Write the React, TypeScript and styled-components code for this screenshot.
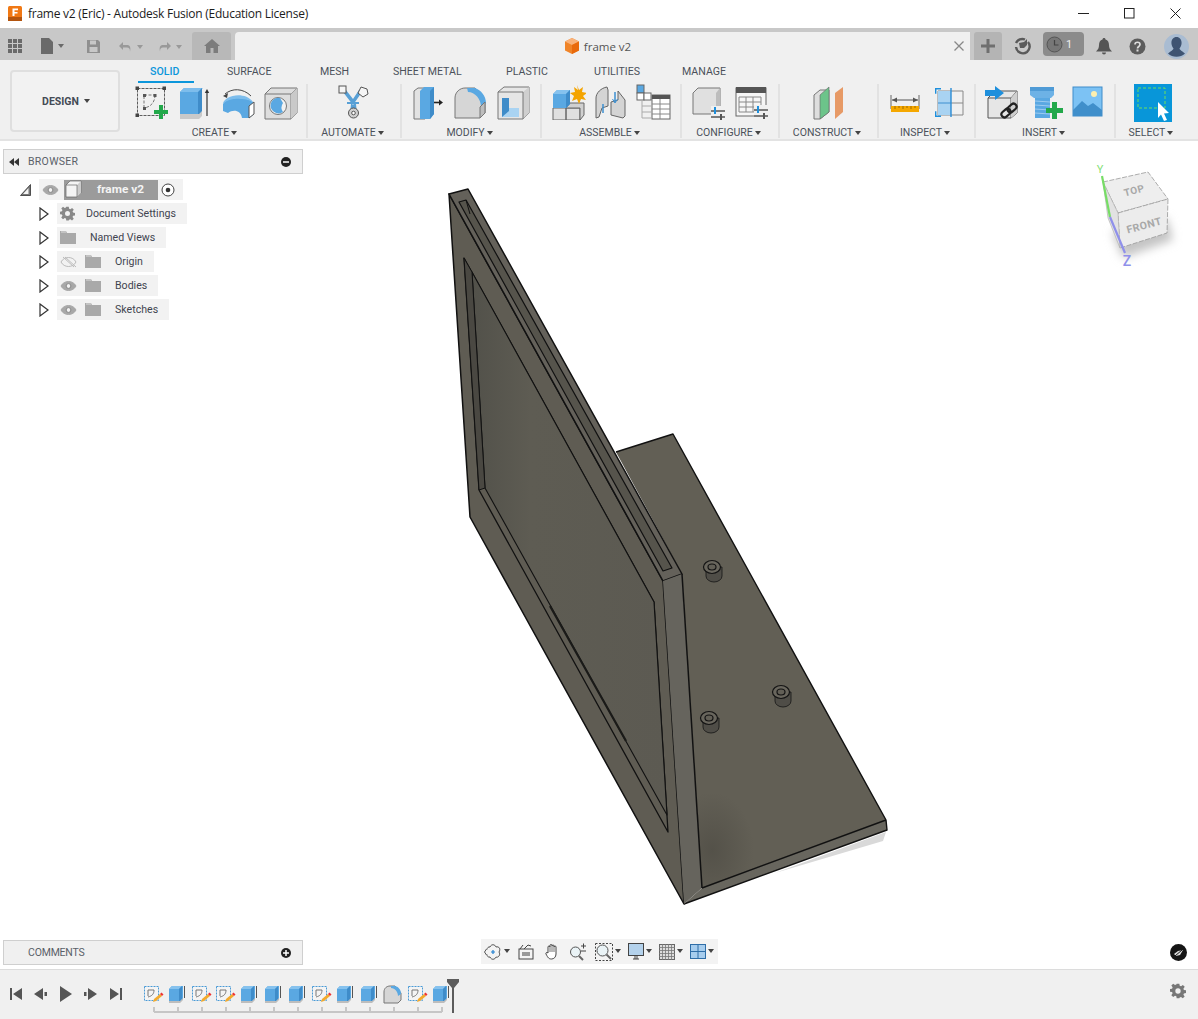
import React from 'react';
import styled, { createGlobalStyle } from 'styled-components';

const GlobalStyle = createGlobalStyle`
  html, body { margin: 0; padding: 0; background: #fff; }
  body { font-family: Roboto, "Liberation Sans", sans-serif; }
`;

const BLUE = '#5aa8e2';
const BLUE_D = '#3f8cc9';
const BLUE_L = '#a9d3f2';
const GREY_LINE = '#111';
const LINE = '#5c5c5c';
const GREEN = '#22a84a';

/* ---------- layout ---------- */

const Page = styled.div`
  width: 1198px;
  height: 1019px;
  display: flex;
  flex-direction: column;
  overflow: hidden;
  background: #fff;
`;

const TitleBar = styled.div`
  height: 28px;
  flex: none;
  box-sizing: border-box;
  padding: 0 0 2px 8px;
  display: flex;
  align-items: center;
  background: #fff;
`;

const TitleText = styled.span`
  margin-left: 6px;
  font: 400 12px "Open Sans", sans-serif;
  letter-spacing: -0.25px;
  color: #1c1c1c;
  flex: 1;
`;

const WinButton = styled.div`
  width: 46px;
  height: 24px;
  display: flex;
  align-items: center;
  justify-content: center;
`;

const TabStrip = styled.div`
  height: 32px;
  flex: none;
  box-sizing: border-box;
  padding-top: 4px;
  display: flex;
  background: #c8c8c8;
`;

const StripButton = styled.div<{ $w: number }>`
  width: ${(p) => p.$w}px;
  height: 28px;
  flex: none;
  display: flex;
  align-items: center;
  justify-content: center;
`;

const HomeTab = styled(StripButton)`
  margin-left: 3px;
  background: #b8b8b8;
  border-radius: 3px 3px 0 0;
`;

const DocTab = styled.div`
  width: 735px;
  margin-left: 4px;
  padding-right: 10px;
  box-sizing: border-box;
  flex: none;
  position: relative;
  display: flex;
  align-items: center;
  justify-content: center;
  gap: 4px;
  background: #f0f0f0;
  border-radius: 4px 0 0 0;
  font: 400 11.5px "Open Sans", sans-serif;
  color: #555;
`;

const DocClose = styled.svg`
  position: absolute;
  right: 6px;
  top: 9px;
`;

const PlusTab = styled(StripButton)`
  margin-left: 4px;
  background: #b4b4b4;
  border-radius: 3px 3px 0 0;
`;

const ClockPill = styled.div`
  width: 41px;
  height: 24px;
  margin-left: 1px;
  flex: none;
  display: flex;
  align-items: center;
  gap: 3px;
  padding-left: 3px;
  box-sizing: border-box;
  background: #8b8b8b;
  border-radius: 4px;
  font: 400 11px Roboto, sans-serif;
  color: #eee;
`;

const Ribbon = styled.div`
  height: 81px;
  flex: none;
  box-sizing: border-box;
  display: flex;
  background: #f0f0f0;
  border-bottom: 2px solid #e3e3e3;
`;

const DesignButton = styled.div`
  width: 110px;
  height: 62px;
  margin: 10px 0 0 10px;
  padding-left: 2px;
  flex: none;
  box-sizing: border-box;
  display: flex;
  align-items: center;
  justify-content: center;
  gap: 5px;
  background: #f2f2f2;
  border: 2px solid #dfdfdf;
  border-radius: 4px;
  font: 700 10.5px Roboto, sans-serif;
  color: #444b55;
`;

const RibbonBody = styled.div`
  flex: 1;
  display: flex;
  flex-direction: column;
`;

const TabRow = styled.div`
  height: 23px;
  flex: none;
  margin-left: 18px;
  display: flex;
`;

const RibbonTab = styled.div<{ $active?: boolean; $w: number }>`
  width: ${(p) => p.$w}px;
  flex: none;
  box-sizing: border-box;
  height: 23px;
  position: relative;
  padding: 1px 0 0 12px;
  line-height: 21px;
  font-size: 10.6px;
  color: ${(p) => (p.$active ? '#0b96db' : '#4b505a')};
  font-weight: ${(p) => (p.$active ? 500 : 400)};
  white-space: nowrap;

  &::after {
    content: '';
    display: ${(p) => (p.$active ? 'block' : 'none')};
    position: absolute;
    left: 0;
    bottom: 0;
    width: 56px;
    height: 2px;
    background: #0b96db;
  }
`;

const GroupRow = styled.div`
  margin: 1px 0 0 6px;
  display: flex;
`;

const Group = styled.div<{ $w: number; $last?: boolean }>`
  width: ${(p) => p.$w}px;
  height: 54px;
  flex: none;
  box-sizing: border-box;
  display: flex;
  flex-direction: column;
  align-items: center;
  border-right: 2px solid ${(p) => (p.$last ? 'transparent' : '#e2e2e2')};
`;

const ToolRow = styled.div`
  height: 36px;
  display: flex;
  gap: 7px;
`;

const GroupLabel = styled.div`
  margin: 6px 0 0 -3px;
  display: flex;
  align-items: center;
  gap: 2px;
  line-height: 14px;
  font-size: 10.5px;
  color: #4b505a;
  white-space: nowrap;
`;

const Caret = styled.i`
  display: inline-block;
  width: 0;
  height: 0;
  border-left: 3px solid transparent;
  border-right: 3px solid transparent;
  border-top: 4px solid #444;
  margin-top: -1px;
`;

const ToolIcon = styled.svg.attrs({ width: 36, height: 36, viewBox: '0 0 36 36' })`
  display: block;
  flex: none;
`;

const Canvas = styled.div`
  flex: 1;
  position: relative;
  background: #fff;
`;

const ModelSvg = styled.svg`
  position: absolute;
  inset: 0;
`;

const BrowserDock = styled.div`
  position: absolute;
  left: 3px;
  top: 8px;
  width: 300px;
`;

const DockHead = styled.div`
  height: 25px;
  box-sizing: border-box;
  display: flex;
  align-items: center;
  padding: 0 11px 0 5px;
  background: #f0f0f0;
  border: 1px solid #cfcfcf;
  font-size: 10.5px;
  color: #5a6068;
`;

const DockTitle = styled.span`
  margin-left: 9px;
  flex: 1;
  letter-spacing: 0.3px;
`;

const CommentsDock = styled(BrowserDock)`
  top: 799px;
`;

const CommentsTitle = styled.span`
  margin-left: 19px;
  flex: 1;
  letter-spacing: -0.2px;
`;

const Tree = styled.div`
  margin-top: 5px;
  display: flex;
  flex-direction: column;
  gap: 3px;
`;

const TreeRow = styled.div<{ $root?: boolean }>`
  height: 21px;
  display: flex;
  align-items: center;
  gap: 8px;
  padding-left: ${(p) => (p.$root ? 17 : 36)}px;
`;

const Chip = styled.div`
  height: 21px;
  display: flex;
  align-items: center;
  padding: 0 11px 0 3px;
  background: #f2f2f2;
  font-size: 10.6px;
  color: #3f4450;
  white-space: nowrap;
`;

const RootChip = styled(Chip)`
  padding: 0 8px 0 3px;
  gap: 5px;
`;

const RootLabel = styled.div`
  width: 94px;
  height: 20px;
  box-sizing: border-box;
  display: flex;
  align-items: center;
  padding: 0 0 1px 1px;
  background: #9b9b9b;
  color: #f4f4f4;
  font-weight: 700;
  font-size: 11.8px;
`;

const RootName = styled.span`
  margin-left: 15px;
`;

const ActiveTarget = styled.svg`
  margin-left: -2px;
`;

const ChipLabel = styled.span<{ $ml: number }>`
  margin-left: ${(p) => p.$ml}px;
  display: inline-flex;
`;

const NavBar = styled.div`
  position: absolute;
  left: 481px;
  top: 798px;
  width: 237px;
  height: 25px;
  box-sizing: border-box;
  display: flex;
  align-items: center;
  gap: 8px;
  padding-left: 3px;
  background: #f3f3f3;
`;

const NavItem = styled.div`
  display: flex;
  align-items: center;
  gap: 2px;

  & > i {
    margin-right: -1px;
  }
`;

const NavBadge = styled.svg`
  position: absolute;
  left: 1170px;
  top: 803px;
`;

const ViewCubeSvg = styled.svg`
  position: absolute;
  left: 1080px;
  top: 15px;
`;

const Timeline = styled.div`
  height: 50px;
  flex: none;
  box-sizing: border-box;
  display: flex;
  align-items: flex-start;
  padding: 13px 0 0 3px;
  background: #f0f0f0;
  border-top: 1px solid #dcdcdc;
`;

const PlayButton = styled.div`
  width: 25px;
  height: 22px;
  flex: none;
  display: flex;
  align-items: center;
  justify-content: center;
`;

const Track = styled.div`
  margin-left: 12px;
  position: relative;
  width: 312px;
  flex: none;
`;

const TrackItems = styled.div`
  display: flex;
`;

const TrackBracket = styled.svg`
  display: block;
`;

const Playhead = styled.svg`
  position: absolute;
  left: 307px;
  top: -4px;
`;

const TimelineGear = styled.div`
  margin: 0 12px 0 auto;
`;

/* ---------- ribbon icons ---------- */

const SketchIcon = () => (
  <ToolIcon>
    <rect x="3.5" y="4.5" width="27" height="27" fill="none" stroke={LINE} strokeDasharray="3 1" />
    {[[3, 4], [30, 4], [3, 31]].map(([x, y]) => (
      <rect key={x * 40 + y} x={x - 1.5} y={y - 1.5} width="3.5" height="3.5" fill="#444" />
    ))}
    <path d="M10 11h11M10 12v12M21 11c0 7-4 12-11 13" fill="none" stroke="#777" strokeDasharray="3 1.5" />
    <rect x="9" y="10" width="3" height="3" fill="#555" />
    <rect x="19.5" y="10" width="3" height="3" fill="#555" />
    <rect x="9" y="23" width="3" height="3" fill="#555" />
    <path d="M25 21h4v5h5v4h-5v5h-4v-5h-5v-4h5z" fill={GREEN} />
  </ToolIcon>
);

const ExtrudeIcon = () => (
  <ToolIcon>
    <path d="M3 8l4-4h18v25H3z" fill={BLUE} />
    <path d="M3 8h18v22H3z" fill={BLUE} />
    <path d="M3 8l4-4h19l-4 4z" fill="#7dbdec" />
    <path d="M21 8l4-4v25l-4 4z" fill={BLUE_D} />
    <path d="M3 30h19l3-3v5l-3 3H3z" fill="#c9c9c9" />
    <path d="M30 32V7" stroke="#333" strokeWidth="1.2" />
    <path d="M27.8 9l2.2-4 2.2 4z" fill="#333" />
  </ToolIcon>
);

const RevolveIcon = () => (
  <ToolIcon>
    <path d="M3 20c4-7 22-8 30-2v13l-4 3H22c-1-8-9-9-14-5l-5-2z" fill={BLUE} />
    <path d="M3 20c1-9 22-13 30-2-8-4-24-5-30 2z" fill="#7dbdec" />
    <path d="M29 22l5-4v12l-5 4z" fill="#fff" stroke="#555" />
    <path d="M5 10c7-6 18-6 26 2" fill="none" stroke="#444" />
    <path d="M3 12l5-3-1 5z" fill="#444" />
  </ToolIcon>
);

const HoleIcon = () => (
  <ToolIcon>
    <path d="M2 10l6-6h26v25l-6 6H2z" fill="#dedede" stroke="#777" />
    <path d="M2 10h26v25M28 10l6-6" fill="none" stroke="#777" />
    <path d="M28 10l6-6v25l-6 6z" fill="#c9c9c9" />
    <circle cx="15" cy="22" r="8.5" fill="#f2f2f2" stroke="#777" />
    <path d="M8 19a8 8 0 0 1 9-5l3 5a8 8 0 0 0 0 9 8 8 0 0 1-12-9z" fill={BLUE} />
  </ToolIcon>
);

const AutomateIcon = () => (
  <ToolIcon>
    <path d="M7 8l10 13 9-13-3-2-6 9-7-9zM15 20h5l1 10h-7z" fill="#58a0d6" />
    <path d="M11 18h12v2H11z" fill="#58a0d6" />
    <rect x="3" y="2" width="7" height="7" fill="#f5f5f5" stroke="#555" />
    <path d="M25 3l6 2 1 5-5 3-5-4z" fill="#f5f5f5" stroke="#555" />
    <circle cx="17.5" cy="29" r="5" fill="#cfcfcf" stroke="#555" />
    <circle cx="17.5" cy="29" r="1.8" fill="#fff" stroke="#555" />
  </ToolIcon>
);

const PressPullIcon = () => (
  <ToolIcon>
    <path d="M4 7l4-3h7v31H4z" fill="#e2e2e2" stroke="#777" />
    <path d="M10 7l4-4h10v27l-4 5H10z" fill={BLUE} />
    <path d="M20 35V7l4-4v27z" fill={BLUE_D} />
    <path d="M24 18.5h7" stroke="#222" strokeWidth="1.6" />
    <path d="M29 15.5l4 3-4 3z" fill="#222" />
  </ToolIcon>
);

const FilletIcon = () => (
  <ToolIcon>
    <path d="M2 34V14C2 8 7 4 12 4h10l10 14v11l-5 5z" fill="#d6d6d6" stroke="#777" />
    <path d="M14 4h8c6 2 11 8 11 15l-5 4c0-8-6-15-13-15z" fill={BLUE} />
    <path d="M27 34v-11l5-5v11z" fill="#bdbdbd" stroke="#777" />
  </ToolIcon>
);

const ShellIcon = () => (
  <ToolIcon>
    <path d="M2 8l6-5h25v26l-6 6H2z" fill="#e6e6e6" stroke="#777" />
    <path d="M27 8l6-5v26l-6 6z" fill="#cfcfcf" />
    <path d="M2 8h25v27" fill="none" stroke="#777" />
    <path d="M6 14h7v10h10v9H6z" fill={BLUE_L} />
    <path d="M6 14h7v13l-7 6z" fill={BLUE_D} />
  </ToolIcon>
);

const NewComponentIcon = () => (
  <ToolIcon>
    <path d="M3 24h13v12H3zM16 24h14v12H16z" fill="#e0e0e0" stroke="#666" />
    <path d="M16 24l4-5h14v12l-4 5V24z" fill="#d0d0d0" stroke="#666" />
    <path d="M3 10l4-4h13v14l-4 4H3z" fill={BLUE} />
    <path d="M3 10l4-4h13l-4 4z" fill="#86c2ee" />
    <path d="M16 10l4-4v14l-4 4z" fill={BLUE_D} />
    <path d="M27 1l2 5 4-3-1 5 5 1-4 3 3 4-5-1-2 5-2-5-5 2 2-5-4-3 5-1-1-5 4 3z" fill="#f4a400" />
  </ToolIcon>
);

const JointIcon = () => (
  <ToolIcon>
    <path d="M3 14c0-5 5-10 11-11l1 3v16l-6 2-3 9-3 1z" fill="#d4d4d4" stroke="#666" />
    <path d="M18 18l7-2V7l7 9v16l-2 2-12-3z" fill="#d4d4d4" stroke="#666" />
    <path d="M10 20v9M22 8v10" stroke="#3c8fd0" strokeWidth="1.5" />
    <path d="M19.500 15l2.500 4 2.500-4" fill="none" stroke="#3c8fd0" />
  </ToolIcon>
);

const BomIcon = () => (
  <ToolIcon>
    <rect x="1" y="1" width="7" height="8" fill={BLUE} stroke="#666" />
    <rect x="1" y="9" width="7" height="7" fill="#fff" stroke="#666" />
    <rect x="8" y="9" width="7" height="7" fill="#fff" stroke="#666" />
    <path d="M6 16v18h9M6 22h9M6 28h9" fill="none" stroke="#aaa" />
    <rect x="16" y="11" width="18" height="24" fill="#fff" stroke="#666" />
    <rect x="16" y="11" width="18" height="4" fill="#555" />
    <path d="M16 20h18M16 25h18M16 30h18M24 15v20" stroke="#888" />
  </ToolIcon>
);

const ChangeParamsIcon = () => (
  <ToolIcon>
    <path d="M2 9l5-5h22v26H2z" fill="#e0e0e0" stroke="#777" />
    <path d="M25 9l4-5v24l-4 3z" fill="#bdbdbd" />
    <rect x="20" y="22" width="16" height="13" fill="#f0f0f0" />
    <path d="M20 27h14M20 33h14" stroke="#555" strokeWidth="1.6" />
    <path d="M24 23v7" stroke="#1e8fdc" strokeWidth="2" />
    <path d="M30 30v6" stroke="#555" strokeWidth="2" />
  </ToolIcon>
);

const ConfigTableIcon = () => (
  <ToolIcon>
    <rect x="2" y="4" width="30" height="28" fill="#f6f6f6" stroke="#666" />
    <rect x="2" y="3" width="30" height="6" fill="#555" />
    <path d="M5 13h22v15H5zM5 18h22M5 23h22M12 13v15M19 13v15" fill="none" stroke="#888" />
    <rect x="20" y="21" width="16" height="14" fill="#f0f0f0" />
    <path d="M20 26h14M20 32h14" stroke="#555" strokeWidth="1.6" />
    <path d="M24 22v7" stroke="#1e8fdc" strokeWidth="2" />
    <path d="M30 29v6" stroke="#555" strokeWidth="2" />
  </ToolIcon>
);

const PlaneIcon = () => (
  <ToolIcon>
    <path d="M3 11l6-5h9v22l-9 7H3z" fill="#dedede" stroke="#777" />
    <path d="M9 35V11l9-8v25z" fill="#6cc48a" stroke="#666" strokeWidth=".6" />
    <path d="M24 9l8-6v25l-8 7z" fill="#e79a66" />
  </ToolIcon>
);

const MeasureIcon = () => (
  <ToolIcon>
    <path d="M4 11v14M32 11v14" stroke="#666" />
    <path d="M5 16h26" stroke="#555" />
    <path d="M5 16l5-2.5v5zM31 16l-5-2.5v5z" fill="#555" />
    <rect x="4" y="22" width="28" height="6" fill="#f5a800" />
    <path d="M8 22v3M12 22v2M16 22v3M20 22v2M24 22v3M28 22v2" stroke="#a06a00" />
  </ToolIcon>
);

const SectionIcon = () => (
  <ToolIcon>
    <path d="M8 7h25v24H8z" fill="none" stroke="#888" />
    <path d="M8 19h25" stroke="#888" />
    <rect x="8" y="7" width="13" height="24" fill={BLUE_L} />
    <path d="M8 19h13" stroke="#3c8fd0" />
    <path d="M21 4v29" stroke="#2a8bd4" strokeWidth="1.4" />
    <path d="M11 4.700H5.700v5M11 32.300H5.700v-5" fill="none" stroke="#1e8fdc" strokeWidth="1.4" />
  </ToolIcon>
);

const DeriveIcon = () => (
  <ToolIcon>
    <path d="M4 14l7-7h22v22l-6 5H4z" fill="#e6e6e6" stroke="#555" />
    <path d="M4 14h23v20M27 14l6-7" fill="none" stroke="#555" />
    <path d="M27 14l6-7v22l-6 5z" fill="#cfcfcf" />
    <path d="M1 6h10V2l9 7-9 7v-4H1z" fill="#1e8fdc" />
    <g fill="none" stroke="#222" strokeWidth="2.2">
      <rect x="17" y="26" width="10" height="6" rx="3" transform="rotate(-40 22 29)" />
      <rect x="23" y="21" width="10" height="6" rx="3" transform="rotate(-40 28 24)" />
    </g>
  </ToolIcon>
);

const BoltIcon = () => (
  <ToolIcon>
    <path d="M3 3h24v8l-3 3H7l-4-3z" fill="#6db2e6" />
    <path d="M3 3h24v4H3z" fill="#4f9bd6" />
    <rect x="8" y="14" width="15" height="20" fill={BLUE} />
    <path d="M8 17l15 1M8 21l15 1M8 25l15 1M8 29l15 1" stroke="#9ccbf0" />
    <path d="M25 18h5v6h6v5h-6v6h-5v-6h-6v-5h6z" fill={GREEN} />
  </ToolIcon>
);

const ImageIcon = () => (
  <ToolIcon>
    <rect x="3" y="3" width="29" height="29" fill="#7cc2f4" stroke={BLUE_D} />
    <circle cx="24" cy="10" r="3" fill="#fdf0b0" />
    <path d="M3 26l9-9 6 5 5-3 9 7v6H3z" fill="#408fcb" />
  </ToolIcon>
);

const SelectIcon = () => (
  <svg width="38" height="38" viewBox="0 0 38 38">
    <rect width="38" height="38" fill="#0896d9" />
    <rect x="4" y="4" width="27" height="20" fill="none" stroke="#6fe05a" strokeDasharray="3 2" />
    <path d="M24 18l11 11-5 .5 3 6.5-3 1-3-6.500-3 3.500z" fill="#fff" />
  </svg>
);

/* ---------- small glyphs ---------- */

const Eye = ({ off }: { off?: boolean }) => (
  <svg width="17" height="12" viewBox="0 0 17 12">
    <path d="M1 6c3-6 12-6 15 0-3 6-12 6-15 0z" fill={off ? 'none' : '#a8a8a8'} stroke={off ? '#bbb' : '#a8a8a8'} />
    {off ? (
      <path d="M3 1l11 10M5 1l11 10" stroke="#bbb" />
    ) : (
      <circle cx="8.500" cy="6" r="2.400" fill="#f2f2f2" stroke="#888" />
    )}
  </svg>
);

const Folder = () => (
  <svg width="16" height="13" viewBox="0 0 16 13">
    <path d="M0 0h6l1 2h9v11H0z" fill="#a9a9a9" />
    <path d="M1 1h5" stroke="#ddd" />
  </svg>
);

const Twist = () => (
  <svg width="10" height="14" viewBox="0 0 10 14">
    <path d="M1 1l8 6-8 6z" fill="#fff" stroke="#333" strokeWidth="1.2" />
  </svg>
);

const Gear = ({ size = 15, color = '#888' }: { size?: number; color?: string }) => (
  <svg width={size} height={size} viewBox="0 0 24 24">
    <path
      fill={color}
      fillRule="evenodd"
      d="M10 1h4l.6 3.200 2 .8L19.300 3l2.800 2.800-2 2.700.8 2 3.100.5v4l-3.100.6-.8 2 1.900 2.600-2.800 2.800-2.700-1.900-2 .8L14 23h-4l-.5-3.100-2-.8L4.800 21 2 18.200l1.900-2.700-.8-2L0 13V9l3.100-.5.8-2L2 3.800 4.800 1l2.700 2 2-.8zM12 8a4 4 0 1 0 0 8 4 4 0 0 0 0-8z"
    />
  </svg>
);

const SketchMini = () => (
  <svg width="24" height="22" viewBox="0 0 24 22">
    <rect x="4.500" y="3.500" width="14" height="14" fill="#f4f4f4" stroke="#4a9ad6" strokeDasharray="2 1" />
    <path d="M8 7h6M8 7v6M14 7c0 4-2 6-6 7" fill="none" stroke="#777" />
    <path d="M13 19l1-3 6-5 2 2-6 5z" fill="#f3aa2c" />
    <path d="M20 11l1.500-1.500 2 2L22 13z" fill="#e33" />
  </svg>
);

const ExtrudeMini = () => (
  <svg width="24" height="22" viewBox="0 0 24 22">
    <path d="M5 6l3-3h11v13l-3 3H5z" fill={BLUE} />
    <path d="M5 6l3-3h10l-3 3z" fill="#86c2ee" />
    <path d="M15 6l3-3v13l-3 3z" fill={BLUE_D} />
    <path d="M5 18h11l3-3v2l-3 3H5z" fill="#bdbdbd" />
    <path d="M20.500 3v12" stroke="#555" />
  </svg>
);

const FilletMini = () => (
  <svg width="24" height="22" viewBox="0 0 24 22">
    <path d="M4 20V9c0-4 3-6 6-6h5l6 7v7l-3 3z" fill="#d6d6d6" stroke="#777" />
    <path d="M11 3h4c4 1 6 4 6 8l-3 2c0-4-3-8-7-8z" fill={BLUE} />
  </svg>
);

const items = ['s', 'e', 's', 's', 'e', 'e', 'e', 's', 'e', 'e', 'f', 's', 'e'];

const groups: { w: number; label: string; icons: React.ReactNode[]; last?: boolean }[] = [
  { w: 182, label: 'CREATE', icons: [<SketchIcon />, <ExtrudeIcon />, <RevolveIcon />, <HoleIcon />] },
  { w: 94, label: 'AUTOMATE', icons: [<AutomateIcon />] },
  { w: 140, label: 'MODIFY', icons: [<PressPullIcon />, <FilletIcon />, <ShellIcon />] },
  { w: 140, label: 'ASSEMBLE', icons: [<NewComponentIcon />, <JointIcon />, <BomIcon />] },
  { w: 98, label: 'CONFIGURE', icons: [<ChangeParamsIcon />, <ConfigTableIcon />] },
  { w: 99, label: 'CONSTRUCT', icons: [<PlaneIcon />] },
  { w: 97, label: 'INSPECT', icons: [<MeasureIcon />, <SectionIcon />] },
  { w: 140, label: 'INSERT', icons: [<DeriveIcon />, <BoltIcon />, <ImageIcon />] },
  { w: 75, label: 'SELECT', icons: [<SelectIcon />], last: true },
];

const tabs = [
  { label: 'SOLID', w: 77 },
  { label: 'SURFACE', w: 93 },
  { label: 'MESH', w: 73 },
  { label: 'SHEET METAL', w: 113 },
  { label: 'PLASTIC', w: 88 },
  { label: 'UTILITIES', w: 88 },
  { label: 'MANAGE', w: 69 },
];

const Peg = ({ x, y }: { x: number; y: number }) => (
  <g stroke="#141414">
    <path d={`M${x - 6} ${y}v9a8 6 0 0 0 16 0v-9z`} fill="#4f4d47" strokeWidth=".8" />
    <ellipse cx={x} cy={y} rx="8.500" ry="6.500" fill="#69665d" strokeWidth="1.200" />
    <ellipse cx={x} cy={y} rx="4" ry="3" fill="#625f56" strokeWidth="1.200" />
  </g>
);

const Model = () => (
  <ModelSvg width="1198" height="828" viewBox="0 141 1198 828">
    <defs>
      <radialGradient id="corner" cx="0.5" cy="0.5" r="0.5">
        <stop offset="0" stopColor="#3f3d37" stopOpacity="0.4" />
        <stop offset="1" stopColor="#3f3d37" stopOpacity="0" />
      </radialGradient>
      <linearGradient id="pane" x1="0" y1="0" x2="1" y2="0">
        <stop offset="0" stopColor="#52514a" />
        <stop offset="0.3" stopColor="#5e5c53" />
        <stop offset="1" stopColor="#5c5a52" />
      </linearGradient>
      <clipPath id="plateClip">
        <path d="M616 452l57-18 213 386-184 68-20-314z" />
      </clipPath>
    </defs>
    {/* shadow under the plate */}
    <path d="M886 832l-3 9-108 32z" fill="#d9d9d9" />
    {/* base plate */}
    <path d="M616 452l57-18 213 386-184 68-20-314z" fill="#625f55" />
    <ellipse cx="712" cy="850" rx="42" ry="58" fill="url(#corner)" clipPath="url(#plateClip)" />
    <path d="M702 888L886 820l1 10-203 74z" fill="#68665e" />
    <path d="M616 452l57-18 213 386 1 10-203 74M886 820L702 888" fill="none" stroke={GREY_LINE} strokeWidth="1.400" strokeLinejoin="round" />
    {/* wall */}
    <path d="M449 194l21 323 214 387-21-323z" fill="#5f5c53" stroke={GREY_LINE} strokeWidth="1.500" strokeLinejoin="round" />
    <path d="M449 194l19-5 214 385-19 7z" fill="#64615a" stroke={GREY_LINE} strokeWidth="1.500" strokeLinejoin="round" />
    <path d="M663 581l19-7 20 314-18 16z" fill="#66645d" />
    <path d="M682 574l20 314" stroke={GREY_LINE} strokeWidth="1.500" />
    {/* slot in the top edge */}
    <path d="M459 202l7-2 206 368-9 3z" fill="#56544c" stroke={GREY_LINE} strokeWidth="1.200" strokeLinejoin="round" />
    <path d="M466 200l4 14" stroke={GREY_LINE} strokeWidth="1" />
    {/* window recess */}
    <path d="M464 258l190 344 14 230-189-342z" fill="#5f5c53" stroke={GREY_LINE} strokeWidth="1.300" strokeLinejoin="round" />
    <path d="M472 272l182 330 13 213-182-327z" fill="url(#pane)" stroke={GREY_LINE} strokeWidth="1.100" strokeLinejoin="round" />
    <path d="M479 490l6-2-13-216-8-14z" fill="#4a4842" stroke={GREY_LINE} strokeWidth="1" strokeLinejoin="round" />
    <path d="M550 606l76 135" stroke="#1a1a18" strokeWidth="2.200" />
    <Peg x={712} y={567} />
    <Peg x={781} y={692} />
    <Peg x={709} y={718} />
  </ModelSvg>
);

const ViewCube = () => (
  <ViewCubeSvg width="110" height="120" viewBox="1080 156 110 120">
    <defs>
      <filter id="soft" x="-30%" y="-30%" width="160%" height="160%">
        <feGaussianBlur stdDeviation="5" />
      </filter>
    </defs>
    <path d="M1112 232l55-14 6 22-50 18z" fill="#c4c4c4" filter="url(#soft)" />
    <path d="M1103 182l45-10 20 27-50 14z" fill="#eeeeee" stroke="#999" strokeWidth=".8" strokeDasharray="5 1.500" strokeLinejoin="round" />
    <path d="M1118 213l50-14-1 34-47 15z" fill="#ececec" stroke="#999" strokeWidth=".8" strokeDasharray="5 1.500" strokeLinejoin="round" />
    <path d="M1103 182l15 31 2 35-12-30z" fill="#e2e2e2" stroke="#aaa" strokeWidth=".6" />
    <path d="M1102 176l8 41" stroke="#77dd66" strokeWidth="2.200" />
    <path d="M1110 217l15 36" stroke="#8f90ea" strokeWidth="2.200" />
    <text x="1100" y="173" fontFamily="Roboto, sans-serif" fontSize="11" fill="#86e078" textAnchor="middle">Y</text>
    <text x="1127" y="266" fontFamily="Roboto, sans-serif" fontSize="14" fontWeight="500" fill="#8f90ea" textAnchor="middle">Z</text>
    <text x="1134" y="194" transform="rotate(-15 1134 190)" fontFamily="Roboto, sans-serif" fontWeight="700" fontSize="10" fill="#a8a8a8" textAnchor="middle" letterSpacing=".5">TOP</text>
    <text x="1144" y="229" transform="rotate(-15 1144 225)" fontFamily="Roboto, sans-serif" fontWeight="700" fontSize="10.500" fill="#a8a8a8" textAnchor="middle" letterSpacing=".5">FRONT</text>
  </ViewCubeSvg>
);

export default function App() {
  return (
    <Page>
      <GlobalStyle />
      <TitleBar>
        <svg width="14" height="15" viewBox="0 0 14 15">
          <rect width="14" height="15" rx="1.500" fill="#f07814" />
          <rect y="11" width="14" height="4" fill="#b3540e" />
          <path d="M4.500 2.500h5.500v1.700H6.500v1.800h3v1.600h-3v2.500h-2z" fill="#fff" />
        </svg>
        <TitleText>frame v2 (Eric) - Autodesk Fusion (Education License)</TitleText>
        <WinButton>
          <svg width="11" height="11" viewBox="0 0 11 11"><path d="M0 5.500h11" stroke="#222" /></svg>
        </WinButton>
        <WinButton>
          <svg width="11" height="11" viewBox="0 0 11 11"><rect x=".5" y=".5" width="9.500" height="9.500" fill="none" stroke="#222" /></svg>
        </WinButton>
        <WinButton>
          <svg width="11" height="11" viewBox="0 0 11 11"><path d="M.5.500l10 10M10.500.500l-10 10" stroke="#222" /></svg>
        </WinButton>
      </TitleBar>

      <TabStrip>
        <StripButton $w={31}>
          <svg width="15" height="15" viewBox="0 0 15 15" fill="#6a6a6a">
            {[0, 5, 10].flatMap((y) => [0, 5, 10].map((x) => <rect key={`${x}-${y}`} x={x} y={y} width="4" height="4" />))}
          </svg>
        </StripButton>
        <StripButton $w={42}>
          <svg width="26" height="18" viewBox="0 0 26 18">
            <path d="M2 1h8l4 4v12H2z" fill="#6a6a6a" />
            <path d="M19 7h6l-3 4z" fill="#6a6a6a" />
          </svg>
        </StripButton>
        <StripButton $w={40}>
          <svg width="15" height="15" viewBox="0 0 15 15">
            <path d="M1 1h11l2 2v11H1z" fill="#8f8f8f" />
            <rect x="4" y="1.500" width="6" height="4" fill="#c8c8c8" />
            <rect x="3.500" y="8" width="8" height="5" fill="#c8c8c8" />
          </svg>
        </StripButton>
        <StripButton $w={38}>
          <svg width="30" height="15" viewBox="0 0 30 15">
            <path d="M6 3L2 7l4 4V8.500h4c2 0 3 1 3 4 1-4 0-6.500-3-6.500H6z" fill="#999" />
            <path d="M20 6h6l-3 4z" fill="#999" />
          </svg>
        </StripButton>
        <StripButton $w={38}>
          <svg width="30" height="15" viewBox="0 0 30 15">
            <path d="M12 3l4 4-4 4V8.500H8c-2 0-3 1-3 4-1-4 0-6.500 3-6.500h4z" fill="#999" />
            <path d="M21 6h6l-3 4z" fill="#999" />
          </svg>
        </StripButton>
        <HomeTab $w={39}>
          <svg width="16" height="14" viewBox="0 0 16 14">
            <path d="M8 0l8 7h-2v7H9.500V9h-3v5H2V7H0z" fill="#7c7c7c" />
          </svg>
        </HomeTab>
        <DocTab>
          <svg width="16" height="16" viewBox="0 0 16 16">
            <path d="M8 0l7 3.500v9L8 16l-7-3.500v-9z" fill="#f08428" />
            <path d="M8 0l7 3.500L8 7 1 3.500z" fill="#f9b27a" />
            <path d="M8 7l7-3.500v9L8 16z" fill="#e96a0c" />
          </svg>
          frame v2
          <DocClose width="10" height="10" viewBox="0 0 10 10">
            <path d="M.5.500l9 9M9.500.500l-9 9" stroke="#888" strokeWidth="1.300" />
          </DocClose>
        </DocTab>
        <PlusTab $w={28}>
          <svg width="14" height="14" viewBox="0 0 14 14"><path d="M5.500 0h3v5.500H14v3H8.500V14h-3V8.500H0v-3h5.500z" fill="#6f6f6f" /></svg>
        </PlusTab>
        <StripButton $w={40}>
          <svg width="18" height="18" viewBox="0 0 18 18">
            <path d="M3 6a7 7 0 0 1 9-3.500M15 5a7 7 0 0 1-1 10 7 7 0 0 1-11-5" fill="none" stroke="#5a5a5a" strokeWidth="2.400" />
            <path d="M6 6l5-1 3-3v6l-3 3H7z" fill="#5a5a5a" />
          </svg>
        </StripButton>
        <ClockPill>
          <svg width="17" height="17" viewBox="0 0 17 17">
            <circle cx="8.500" cy="8.500" r="7.500" fill="#777" stroke="#555" />
            <path d="M8.500 4v5h4" fill="none" stroke="#444" strokeWidth="1.200" />
          </svg>
          1
        </ClockPill>
        <StripButton $w={40}>
          <svg width="16" height="17" viewBox="0 0 16 17">
            <path d="M8 0c1 0 1.500.7 1.500 1.500C12 2.300 13 4.500 13 7c0 3 1 4.500 3 6.500H0c2-2 3-3.500 3-6.500 0-2.500 1-4.700 3.500-5.500C6.500.7 7 0 8 0zM6 14.500h4a2 2 0 0 1-4 0z" fill="#555" />
          </svg>
        </StripButton>
        <StripButton $w={27}>
          <svg width="17" height="17" viewBox="0 0 17 17">
            <circle cx="8.500" cy="8.500" r="8" fill="#5c5c5c" />
            <path d="M6 6.500c0-3 5-3 5 0 0 2-2.500 2-2.500 4" fill="none" stroke="#ddd" strokeWidth="1.700" />
            <rect x="7.500" y="11.500" width="2" height="2" fill="#ddd" />
          </svg>
        </StripButton>
        <StripButton $w={50}>
          <svg width="25" height="25" viewBox="0 0 25 25">
            <circle cx="12.500" cy="12.500" r="12.500" fill="#a9bcd2" />
            <path d="M12.500 3c3.500 0 5.500 3 5 7-.3 2-1 3-2 4.500 0 1.500 3 2.500 5.500 5a12.500 12.500 0 0 1-17 0c2.500-2.500 5.500-3.500 5.500-5-1-1.500-1.700-2.500-2-4.500-.5-4 1.500-7 5-7z" fill="#3f5472" />
          </svg>
        </StripButton>
      </TabStrip>

      <Ribbon>
        <DesignButton>
          DESIGN <Caret />
        </DesignButton>
        <RibbonBody>
          <TabRow>
            {tabs.map((t, i) => (
              <RibbonTab key={t.label} $w={t.w} $active={i === 0}>{t.label}</RibbonTab>
            ))}
          </TabRow>
          <GroupRow>
            {groups.map((g) => (
              <Group key={g.label} $w={g.w} $last={g.last}>
                <ToolRow>
                  {g.icons.map((icon, i) => (
                    <React.Fragment key={i}>{icon}</React.Fragment>
                  ))}
                </ToolRow>
                <GroupLabel>
                  {g.label} <Caret />
                </GroupLabel>
              </Group>
            ))}
          </GroupRow>
        </RibbonBody>
      </Ribbon>

      <Canvas>
        <Model />
        <BrowserDock>
          <DockHead>
            <svg width="10" height="8" viewBox="0 0 10 8"><path d="M5 0L0 4l5 4zM10 0L5 4l5 4z" fill="#333" /></svg>
            <DockTitle>BROWSER</DockTitle>
            <svg width="10" height="10" viewBox="0 0 10 10">
              <circle cx="5" cy="5" r="5" fill="#222" />
              <path d="M2 5h6" stroke="#fff" strokeWidth="1.500" />
            </svg>
          </DockHead>
          <Tree>
            <TreeRow $root>
              <svg width="11" height="12" viewBox="0 0 11 12">
                <path d="M10.500.500v11H.500z" fill="#777" stroke="#333" strokeWidth=".8" />
                <path d="M8.500 4v6H3z" fill="#f4f4f4" />
              </svg>
              <RootChip>
                <Eye />
                <RootLabel>
                  <svg width="17" height="18" viewBox="0 0 17 18">
                    <path d="M1 5l4-4h11v12l-4 4H1z" fill="#f4f4f4" stroke="#666" strokeWidth=".7" />
                    <path d="M12 5l4-4v12l-4 4z" fill="#ccc" />
                    <path d="M1 5h11v12" fill="none" stroke="#666" strokeWidth=".7" />
                  </svg>
                  <RootName>frame v2</RootName>
                </RootLabel>
                <ActiveTarget width="14" height="14" viewBox="0 0 14 14">
                  <circle cx="7" cy="7" r="6" fill="#fff" stroke="#444" />
                  <circle cx="7" cy="7" r="2.300" fill="#333" />
                </ActiveTarget>
              </RootChip>
            </TreeRow>
            <TreeRow>
              <Twist />
              <Chip>
                <Gear />
                <ChipLabel $ml={11}>Document Settings</ChipLabel>
              </Chip>
            </TreeRow>
            <TreeRow>
              <Twist />
              <Chip>
                <Folder />
                <ChipLabel $ml={14}>Named Views</ChipLabel>
              </Chip>
            </TreeRow>
            <TreeRow>
              <Twist />
              <Chip>
                <Eye off />
                <ChipLabel $ml={8}><Folder /></ChipLabel>
                <ChipLabel $ml={14}>Origin</ChipLabel>
              </Chip>
            </TreeRow>
            <TreeRow>
              <Twist />
              <Chip>
                <Eye />
                <ChipLabel $ml={8}><Folder /></ChipLabel>
                <ChipLabel $ml={14}>Bodies</ChipLabel>
              </Chip>
            </TreeRow>
            <TreeRow>
              <Twist />
              <Chip>
                <Eye />
                <ChipLabel $ml={8}><Folder /></ChipLabel>
                <ChipLabel $ml={14}>Sketches</ChipLabel>
              </Chip>
            </TreeRow>
          </Tree>
        </BrowserDock>

        <ViewCube />

        <CommentsDock>
          <DockHead>
            <CommentsTitle>COMMENTS</CommentsTitle>
            <svg width="10" height="10" viewBox="0 0 10 10">
              <circle cx="5" cy="5" r="5" fill="#222" />
              <path d="M2 5h6M5 2v6" stroke="#fff" strokeWidth="1.500" />
            </svg>
          </DockHead>
        </CommentsDock>

        <NavBar>
          <NavItem>
            <svg width="18" height="18" viewBox="0 0 18 18">
              <path d="M6 4c1-3 5-3 6 0 3-1 5 2 3 5 2 3-1 6-3 5-1 3-5 3-6 0-2 .5-3-1-3-2.500M3 6.500C3 5 4.500 3.500 6 4" fill="none" stroke="#444" strokeWidth=".9" />
              <path d="M7 9h4M9 7v4" stroke="#1e7fd0" strokeWidth="1.200" />
              <path d="M2.500 6L.5 9l2 3" fill="none" stroke="#444" strokeWidth=".9" />
            </svg>
            <Caret />
          </NavItem>
          <NavItem>
            <svg width="18" height="18" viewBox="0 0 18 18">
              <rect x="2" y="6" width="14" height="10" fill="#f4f4f4" stroke="#444" />
              <rect x="5" y="9" width="8" height="4" fill="#999" />
              <path d="M3 6l3-4M7 6l4-4 3 1" fill="none" stroke="#444" />
            </svg>
          </NavItem>
          <NavItem>
            <svg width="18" height="18" viewBox="0 0 18 18">
              <path d="M5 10V4a1 1 0 0 1 2 0V2.500a1 1 0 0 1 2 0V3a1 1 0 0 1 2 0v1a1 1 0 0 1 2 0v7c0 3-2 5-4.500 5S5 15 3 11c-.7-1.500 1-2 2-1z" fill="#fff" stroke="#333" strokeWidth=".9" />
              <path d="M7 4v5M9 3v6M11 4v5" stroke="#333" strokeWidth=".7" />
            </svg>
          </NavItem>
          <NavItem>
            <svg width="18" height="18" viewBox="0 0 18 18">
              <circle cx="6.500" cy="9" r="5" fill="#eaf3f6" stroke="#555" />
              <path d="M10 13l4 4" stroke="#666" strokeWidth="2" />
              <path d="M12 3h5M14.500 .5v5M12 8h5" stroke="#444" />
            </svg>
          </NavItem>
          <NavItem>
            <svg width="18" height="18" viewBox="0 0 18 18">
              <rect x=".5" y=".5" width="17" height="17" fill="none" stroke="#444" strokeDasharray="2 1.500" />
              <circle cx="7.500" cy="7.500" r="5.500" fill="#eaf3f6" stroke="#555" />
              <path d="M11.500 11.500l4.500 4.500" stroke="#666" strokeWidth="2" />
            </svg>
            <Caret />
          </NavItem>
          <NavItem>
            <svg width="16" height="17" viewBox="0 0 16 17">
              <rect x=".5" y=".5" width="15" height="12" fill="#b4d2ec" stroke="#444" />
              <path d="M5 16h6M7 13v3M9 13v3" stroke="#444" />
            </svg>
            <Caret />
          </NavItem>
          <NavItem>
            <svg width="16" height="16" viewBox="0 0 16 16">
              <rect x=".5" y=".5" width="15" height="15" fill="#ddd" stroke="#666" />
              <path d="M3.500 0v16M6.500 0v16M9.500 0v16M12.500 0v16M0 3.500h16M0 6.500h16M0 9.500h16M0 12.500h16" stroke="#777" strokeWidth=".8" />
            </svg>
            <Caret />
          </NavItem>
          <NavItem>
            <svg width="16" height="15" viewBox="0 0 16 15">
              <rect x=".5" y=".5" width="15" height="14" fill="#a7cdee" stroke="#2f6ea8" />
              <path d="M8 0v15M0 7.500h16" stroke="#2f6ea8" />
            </svg>
            <Caret />
          </NavItem>
        </NavBar>

        <NavBadge width="17" height="17" viewBox="0 0 17 17">
          <circle cx="8.500" cy="8.500" r="8.500" fill="#151515" />
          <path d="M4 10l4-3 5-1-3 5-4 1z" fill="#ddd" />
          <path d="M5 12l7-6" stroke="#151515" />
        </NavBadge>
      </Canvas>

      <Timeline>
        <PlayButton>
          <svg width="12" height="12" viewBox="0 0 12 12" fill="#555"><path d="M0 0h2v12H0zM12 0v12L3 6z" /></svg>
        </PlayButton>
        <PlayButton>
          <svg width="13" height="12" viewBox="0 0 13 12" fill="#555"><path d="M9 0v12L0 6zM10.500 4H13v4h-2.500z" /></svg>
        </PlayButton>
        <PlayButton>
          <svg width="12" height="16" viewBox="0 0 12 16" fill="#555"><path d="M0 0l12 8-12 8z" /></svg>
        </PlayButton>
        <PlayButton>
          <svg width="13" height="12" viewBox="0 0 13 12" fill="#555"><path d="M4 0v12l9-6zM0 4h2.500v4H0z" /></svg>
        </PlayButton>
        <PlayButton>
          <svg width="12" height="12" viewBox="0 0 12 12" fill="#555"><path d="M10 0h2v12h-2zM0 0v12l9-6z" /></svg>
        </PlayButton>
        <Track>
          <TrackItems>
            {items.map((k, i) =>
              k === 's' ? <SketchMini key={i} /> : k === 'e' ? <ExtrudeMini key={i} /> : <FilletMini key={i} />,
            )}
          </TrackItems>
          <TrackBracket width="312" height="9" viewBox="0 0 312 9">
            <path
              d={`M14 7h288${Array.from({ length: 13 }, (_, i) => `M${14 + i * 24} 2v5`).join('')}`}
              fill="none"
              stroke="#c6c6c6"
              strokeWidth="2"
            />
          </TrackBracket>
          <Playhead width="12" height="34" viewBox="0 0 12 34">
            <path d="M0 0h12v3L7 9v25H5V9L0 3z" fill="#5c5c5c" />
          </Playhead>
        </Track>
        <TimelineGear>
          <Gear size={16} color="#777" />
        </TimelineGear>
      </Timeline>
    </Page>
  );
}
